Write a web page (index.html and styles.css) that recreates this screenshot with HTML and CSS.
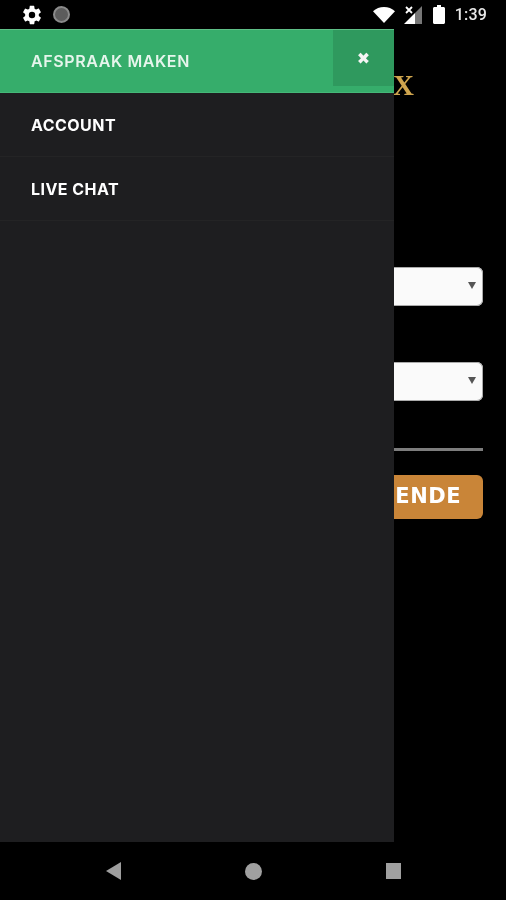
FILE: index.html
```html
<!DOCTYPE html>
<html lang="nl">
<head>
<meta charset="utf-8">
<title>Afspraak maken</title>
<link rel="stylesheet" href="styles.css">
</head>
<body>
<div class="phone">
  <header class="status">
    <svg class="ic-gear" viewBox="0 0 24 24" width="22" height="22"><path fill="#fff" d="M19.4 13c.04-.32.07-.66.07-1s-.03-.68-.07-1l2.1-1.65c.2-.15.25-.42.13-.64l-2-3.46c-.12-.22-.39-.3-.61-.22l-2.49 1c-.52-.4-1.08-.73-1.69-.98l-.38-2.65A.49.49 0 0 0 14 2h-4c-.25 0-.46.18-.49.42l-.38 2.65c-.61.25-1.17.59-1.69.98l-2.49-1a.5.5 0 0 0-.61.22l-2 3.46c-.13.22-.07.49.12.64L4.57 11c-.04.32-.07.66-.07 1s.03.68.07 1l-2.11 1.65c-.19.15-.25.42-.12.64l2 3.46c.12.22.39.3.61.22l2.49-1c.52.4 1.08.73 1.69.98l.38 2.65c.03.24.24.42.49.42h4c.25 0 .46-.18.49-.42l.38-2.65c.61-.25 1.17-.59 1.69-.98l2.49 1c.23.09.49 0 .61-.22l2-3.46c.12-.22.07-.49-.12-.64L19.4 13zM12 15.5a3.5 3.5 0 1 1 0-7 3.5 3.5 0 0 1 0 7z"/></svg>
    <span class="rec"></span>
    <span class="status-gap"></span>
    <svg class="ic-wifi" viewBox="0 0 22 16" width="22" height="16"><path fill="#fff" d="M11 16 0 4.2C3 1.6 6.800 0 11 0s8 1.600 11 4.200z"/></svg>
    <svg class="ic-signal" viewBox="0 0 18 18" width="18" height="18"><path fill="#fff" d="M0 18 11 7v11z"/><path fill="#777" d="M11 7l7-7v18h-7z"/><path stroke="#fff" stroke-width="1.800" d="M2 1l6 6M8 1L2 7"/></svg>
    <svg class="ic-batt" viewBox="0 0 12 19" width="12" height="19"><path fill="#fff" d="M4 0h4v2h2.500c.8 0 1.500.7 1.500 1.500V17.500c0 .8-.7 1.500-1.500 1.500h-9C.7 19 0 18.300 0 17.500V3.500C0 2.700.7 2 1.500 2H4z"/></svg>
    <span class="clock">1:39</span>
  </header>

  <main class="screen">
    <div class="page">
      <div class="logo">X</div>
      <div class="select"><span class="caret"></span></div>
      <div class="select select-second"><span class="caret"></span></div>
      <hr class="rule">
      <div class="next">VOLGENDE</div>
    </div>

    <nav class="drawer">
      <div class="item item-active">
        <span>AFSPRAAK MAKEN</span>
        <span class="close">✖</span>
      </div>
      <div class="item item-plain">ACCOUNT</div>
      <div class="item item-plain">LIVE CHAT</div>
    </nav>
  </main>

  <footer class="navbar">
    <svg viewBox="0 0 15 18" width="15" height="18"><path fill="#9e9e9e" d="M15 0v18L0 9z"/></svg>
    <span class="nav-home"></span>
    <span class="nav-recent"></span>
  </footer>
</div>
</body>
</html>
```
FILE: styles.css
```css
* { box-sizing: border-box; }
html, body { margin: 0; padding: 0; background: #000; }
body { font-family: "Inter", "Liberation Sans", sans-serif; }

.phone {
  width: 506px;
  height: 900px;
  display: flex;
  flex-direction: column;
  overflow: hidden;
  background: #000;
  filter: blur(.45px);
}

.status {
  height: 29px;
  flex: none;
  display: flex;
  align-items: center;
  padding: 0 19px 0 21px;
}
.ic-gear { flex: none; }
.rec {
  width: 17px;
  height: 17px;
  margin-left: 10px;
  border-radius: 50%;
  background: #5c5c5c;
  border: 2px solid #8a8a8a;
  flex: none;
}
.status-gap { flex: 1; }
.ic-wifi { flex: none; margin-right: 9px; }
.ic-signal { flex: none; margin-right: 11px; }
.ic-batt { flex: none; margin-right: 10px; }
.clock {
  color: #e8e8e8;
  font-family: "Roboto", "Liberation Sans", sans-serif;
  font-size: 16px;
  font-weight: 500;
  letter-spacing: .2px;
}

.screen {
  position: relative;
  height: 813px;
  flex: none;
  background: #000;
}
.page {
  height: 100%;
  padding: 0 23px;
  display: flex;
  flex-direction: column;
}
.logo {
  height: 38px;
  margin-top: 37px;
  padding-right: 69px;
  text-align: right;
  color: #cfa54e;
  font-family: "Liberation Serif", serif;
  font-size: 29px;
  font-weight: 700;
  line-height: 38px;
}
.select {
  height: 39px;
  margin-top: 163px;
  position: relative;
  background: #fafafa;
  border-radius: 6px;
  box-shadow: inset 0 0 0 1px #aaa;
}
.select-second { margin-top: 56px; }
.caret {
  position: absolute;
  right: 7px;
  top: 15px;
  border-left: 4px solid transparent;
  border-right: 4px solid transparent;
  border-top: 7px solid #555;
}
.rule {
  height: 3px;
  margin: 47px 0 0;
  border: 0;
  background: #7d7d7d;
}
.next {
  height: 44px;
  margin-top: 24px;
  padding-right: 22px;
  background: #c98538;
  border-radius: 6px;
  color: #fff;
  text-align: right;
  font-family: "DejaVu Sans", sans-serif;
  font-size: 21px;
  font-weight: 700;
  line-height: 43px;
  letter-spacing: .5px;
}

.drawer {
  position: absolute;
  left: 0;
  top: 0;
  width: 394px;
  height: 813px;
  background: #1e1e20;
}
.item {
  display: flex;
  align-items: center;
  padding-left: 31px;
  font-size: 16px;
  letter-spacing: .6px;
  color: #fff;
}
.item-active {
  height: 64px;
  justify-content: space-between;
  background: #36ad6b;
  border-top: 1px solid #5fbf87;
  border-bottom: 1px solid #45b878;
  font-weight: 600;
  color: #e6f5ec;
}
.close {
  width: 61px;
  height: 56px;
  margin-bottom: 6px;
  display: flex;
  align-items: center;
  justify-content: center;
  background: #2f995e;
  color: #f5f5f5;
  font-size: 16px;
  letter-spacing: 0;
  font-family: "DejaVu Sans", sans-serif;
}
.item-plain {
  height: 64px;
  font-weight: 700;
  letter-spacing: .45px;
  border-bottom: 1px solid #242425;
}

.navbar {
  flex: 1;
  display: flex;
  align-items: center;
  justify-content: space-between;
  padding: 0 105px 0 106px;
}
.nav-home {
  width: 17px;
  height: 17px;
  border-radius: 50%;
  background: #a0a0a0;
}
.nav-recent {
  width: 15px;
  height: 16px;
  background: #a0a0a0;
}
```
